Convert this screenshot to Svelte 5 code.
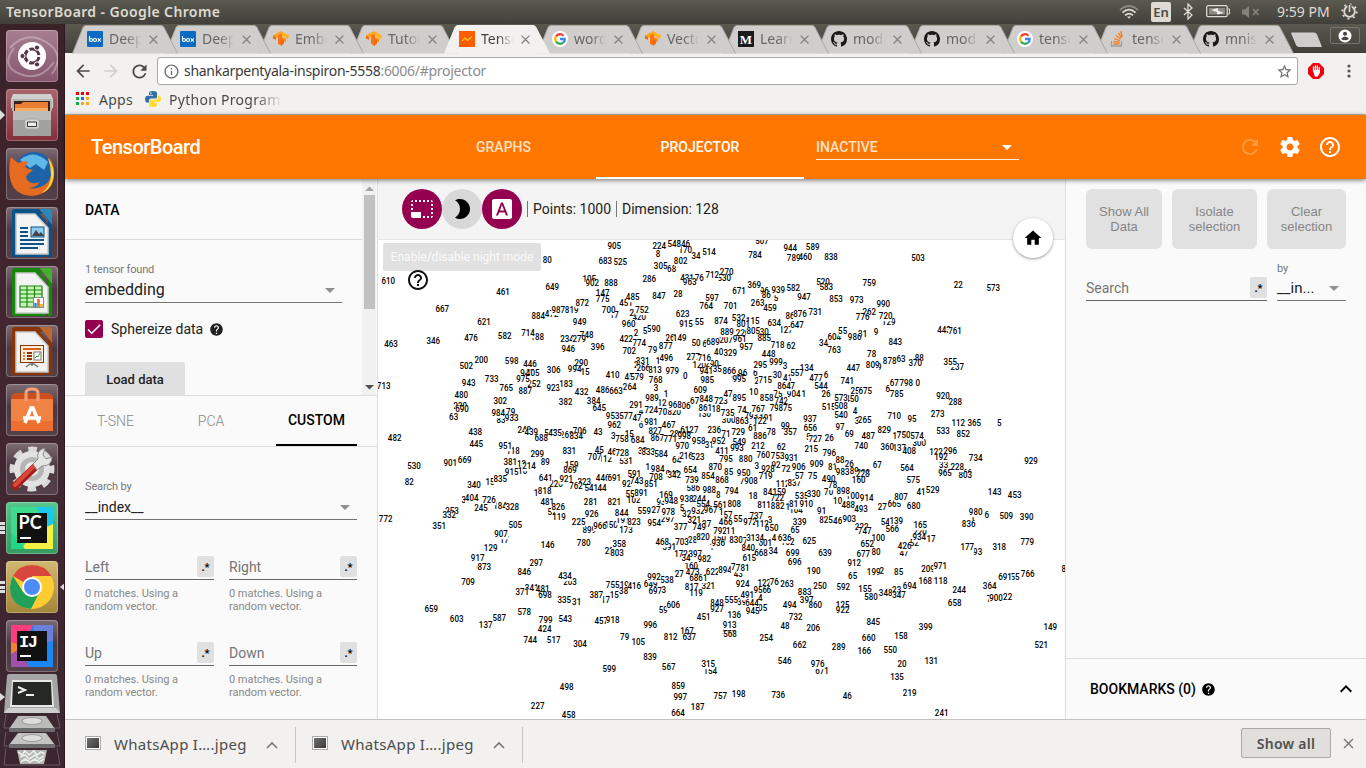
<script>
  const P = {
    settings: 'M19.43 12.98c.04-.32.07-.64.07-.98s-.03-.66-.07-.98l2.11-1.65c.19-.15.24-.42.12-.64l-2-3.46c-.12-.22-.39-.3-.61-.22l-2.49 1c-.52-.4-1.08-.73-1.69-.98l-.38-2.65C14.46 2.18 14.25 2 14 2h-4c-.25 0-.46.18-.49.42l-.38 2.65c-.61.25-1.17.59-1.69.98l-2.49-1c-.23-.09-.49 0-.61.22l-2 3.46c-.13.22-.07.49.12.64l2.11 1.65c-.04.32-.07.65-.07.98s.03.66.07.98l-2.11 1.65c-.19.15-.24.42-.12.64l2 3.46c.12.22.39.3.61.22l2.49-1c.52.4 1.08.73 1.69.98l.38 2.65c.03.24.24.42.49.42h4c.25 0 .46-.18.49-.42l.38-2.65c.61-.25 1.17-.59 1.69-.98l2.49 1c.23.09.49 0 .61-.22l2-3.46c.12-.22.07-.49-.12-.64l-2.11-1.65zM12 15.5c-1.93 0-3.5-1.57-3.5-3.5s1.57-3.5 3.5-3.5 3.5 1.57 3.5 3.5-1.57 3.5-3.5 3.5z',
    helpOutline: 'M11 18h2v-2h-2v2zm1-16C6.48 2 2 6.48 2 12s4.48 10 10 10 10-4.48 10-10S17.52 2 12 2zm0 18c-4.41 0-8-3.59-8-8s3.59-8 8-8 8 3.59 8 8-3.59 8-8 8zm0-14c-2.21 0-4 1.79-4 4h2c0-1.1.9-2 2-2s2 .9 2 2c0 2-3 1.75-3 5h2c0-2.25 3-2.5 3-5 0-2.21-1.79-4-4-4z',
    help: 'M12 2C6.48 2 2 6.48 2 12s4.48 10 10 10 10-4.48 10-10S17.52 2 12 2zm1 17h-2v-2h2v2zm2.07-7.75l-.9.92C13.45 12.9 13 13.5 13 15h-2v-.5c0-1.1.45-2.1 1.17-2.83l1.24-1.26c.37-.36.59-.86.59-1.41 0-1.1-.9-2-2-2s-2 .9-2 2H8c0-2.21 1.79-4 4-4s4 1.79 4 4c0 .88-.36 1.68-.93 2.25z',
    refresh: 'M17.65 6.35C16.2 4.9 14.21 4 12 4c-4.42 0-7.99 3.58-7.99 8s3.57 8 7.99 8c3.73 0 6.84-2.55 7.73-6h-2.08c-.82 2.33-3.04 4-5.65 4-3.31 0-6-2.69-6-6s2.69-6 6-6c1.66 0 3.14.69 4.22 1.78L13 11h7V4l-2.35 2.35z',
    home: 'M10 20v-6h4v6h5v-8h3L12 3 2 12h3v8z',
    select: 'M23 15h-2v2h2v-2zm0-4h-2v2h2v-2zm0 8h-2v2c1 0 2-1 2-2zM15 3h-2v2h2V3zm8 4h-2v2h2V7zm-2-4v2h2c0-1-1-2-2-2zM3 21h8v-6H1v4c0 1.1.9 2 2 2zM3 7H1v2h2V7zm12 12h-2v2h2v-2zm4-16h-2v2h2V3zm0 16h-2v2h2v-2zM3 3C2 3 1 4 1 5h2V3zm0 8H1v2h2v-2zm8-8H9v2h2V3zM7 3H5v2h2V3z',
    night: 'M10 2c-1.82 0-3.53.5-5 1.35C7.99 5.08 10 8.3 10 12s-2.01 6.92-5 8.65C6.47 21.5 8.18 22 10 22c5.52 0 10-4.48 10-10S15.52 2 10 2z',
    label: 'M9.93 13.5h4.14L12 7.98zM20 2H4c-1.1 0-2 .9-2 2v16c0 1.1.9 2 2 2h16c1.1 0 2-.9 2-2V4c0-1.1-.9-2-2-2zm-4.05 16.5l-1.14-3H9.17l-1.12 3H5.96l5.11-13h1.86l5.11 13h-2.09z',
    less: 'M12 8l-6 6 1.41 1.41L12 10.83l4.59 4.58L18 14z',
    star: 'M22 9.24l-7.19-.62L12 2 9.19 8.63 2 9.24l5.46 4.73L5.82 21 12 17.27 18.18 21l-1.63-7.03L22 9.24zM12 15.4l-3.76 2.27 1-4.28-3.32-2.88 4.38-.38L12 6.1l1.71 4.04 4.38.38-3.32 2.88 1 4.28L12 15.4z',
    back: 'M20 11H7.83l5.59-5.59L12 4l-8 8 8 8 1.41-1.41L7.83 13H20v-2z',
    forward: 'M4 11h12.17l-5.59-5.59L12 4l8 8-8 8-1.41-1.41L16.17 13H4v-2z',
    info: 'M11 17h2v-6h-2v6zm1-15C6.48 2 2 6.48 2 12s4.48 10 10 10 10-4.48 10-10S17.52 2 12 2zm0 18c-4.41 0-8-3.59-8-8s3.59-8 8-8 8 3.59 8 8-3.59 8-8 8zM11 9h2V7h-2v2z',
    down: 'M7 10l5 5 5-5z',
    check: 'M9 16.17L4.83 12l-1.42 1.41L9 19 21 7l-1.41-1.41z',
    close: 'M19 6.41L17.59 5 12 10.59 6.41 5 5 6.41 10.59 12 5 17.59 6.41 19 12 13.41 17.59 19 19 17.59 13.41 12z'
  };

  const tabs = [
    ['box', 'Deep'], ['box', 'Deep'], ['tf', 'Embe'], ['tf', 'Tutor'], ['tb', 'Tenso'],
    ['google', 'word2'], ['tf', 'Vecto'], ['medium', 'Learn'], ['github', 'mode'],
    ['github', 'mode'], ['google', 'tenso'], ['so', 'tenso'], ['github', 'mnist']
  ];

  const launchers = ['ubuntu', 'files', 'firefox', 'writer', 'calc', 'impress', 'software', 'settings', 'pycharm', 'chrome', 'idea'];

  // Each region: origin within the plot, then "label x y" in thirds of a pixel.
  // A leading "-" puts the label behind its neighbours.
  const regions = [
    [-2, -4, `610 37 138;461 381 171;649 529 156;80 514 75;683 688 78;-105 640 133;902 649 143;667 199 222;621 324 261;872 619 203;147 680 173;775 680 192;884 487 243;-472 527 238;987 547 225;-819 587 225;-748 632 301;949 611 261;582 386 304;346 172 317;463 45 327;476 285 309;714 456 294;-188 484 305;-234 573 312;279 610 312;946 577 342;396 665 336;200 316 374;598 407 377;446 462 387;-940 453 414;405 470 414;502 271 394;306 533 406;-290 616 384;994 596 402;-15 627 411;713 23 453;943 278 445;733 347 432;975 441 432;-252 474 447;765 391 459;887 448 468;923 532 459;183 570 448;432 617 471;486 680 465;480 256 480;302 373 499;382 569 501;384 653 497;645 670 520;-230 253 512;690 258 522;63 233 547;984 367 534;-79 404 532;-83 375 556;933 407 549;482 56 609;438 298 592;-243 445 586;439 466 591;688 496 608;-543 525 594;435 537 594;-268 572 600;834 601 602;-706 611 588;43 666 592;445 301 627;-118 411 649;951 388 633;299 484 657;831 580 648;45 670 644;-112 688 672;707 656 666;530 114 692;901 223 685;669 266 676;-213 430 688;381 403 681;89 508 681;214 459 693;-159 587 689;869 582 705;-10 440 707;915 407 712`],
    [228, -4, `905 25 34;224 160 34;-846 232 28;548 205 27;-170 238 46;514 309 50;-34 270 62;507 468 18;944 553 39;589 620 37;784 447 61;-460 598 66;789 563 69;838 675 65;525 43 81;802 224 77;8 156 57;-68 197 103;305 164 94;712 319 120;-270 362 110;-530 355 130;-431 243 130;-76 280 130;963 251 142;286 130 132;888 15 143;369 445 149;-520 651 140;583 661 155;939 517 166;-582 562 160;671 399 168;947 594 185;847 159 183;28 216 178;485 80 187;-96 475 168;86 481 180;-5 510 190;597 318 190;764 301 214;-701 374 214;-451 60 205;752 108 225;-420 100 245;-2 77 235;263 455 205;459 492 220;731 628 230;-86 552 243;876 582 238;623 230 238;-55 280 260;915 240 268;-532 398 250;-115 440 258;874 345 257;801 412 268;634 505 264;-127 540 284;647 573 270;700 8 225;-17 25 241;960 68 268;-590 143 283;5 117 288;-2 90 293;422 61 312;774 100 325;702 70 348;-79 140 345;877 179 332;-26 192 310;149 221 310;50 270 324;-6 296 326;689 321 322;889 363 292;-220 410 294;805 442 289;-30 475 292;-207 360 315;961 401 312;885 475 309;957 421 336;718 515 330;62 555 332;34 653 325;604 685 307;763 685 345;40 338 350;329 373 355;448 488 356;-1 156 378;496 181 370;-277 262 367;716 295 369;-290 318 386;-120 280 391;-331 110 378;-2 91 390;266 112 399;813 147 404;979 199 408;0 238 423;941 301 408;-35 334 401;866 370 408;-96 410 415;-6 448 413;985 304 435;-995 397 430;995 400 432;295 463 390;999 510 380;3 537 394;-134 602 400;557 573 414;-30 514 419;-41 545 428;-2 452 437;715 478 436;477 630 429;6 660 420;410 20 419;-45 69 425;579 93 427;768 149 436;264 71 457;3 150 460;663 30 469;1 180 476;989 138 488;609 283 466;10 443 471;47 366 477;895 400 489;-723 345 499;848 301 491;-67 266 498;858 482 489;-75 516 478;904 563 476;1 593 478;-742 526 499;864 534 452;-7 560 453;544 645 452;26 660 477;291 90 511;-12 168 504;-4 105 528;724 136 524;-70 170 532;968 207 509;-06 240 514;-820 205 530;-18 330 521;861 298 519;-130 295 537;735 365 534;-74 408 526;767 457 522;-79 505 518;875 538 518;515 668 517;937 612 553;-793 436 542;-191 480 549;863 408 558;-122 462 559;-300 368 555;953 20 542;-577 60 542;47 93 550;-6 105 570;981 135 562;962 25 571;467 188 569;99 538 573;656 613 579;-6127 250 584;-998 235 601;-28 205 597;-827 148 588;236 325 586;71 360 597;729 397 590;-61 440 580;78 496 592;886 462 604;357 553 592;-3 22 602;-15 70 597;758 48 613;684 95 616;867 154 608;771 193 612;998 235 602;958 278 618;-31 310 631;952 338 618;411 348 647;993 393 638;-549 400 622;212 456 633;-5 607 606;727 628 611;-26 670 610;970 229 632;62 526 636;215 616 643;46 18 651;728 49 655;-33 110 649;833 127 650;584 165 656;-531 60 677;64 212 675;216 240 664;523 275 667;795 360 672;880 419 672;760 472 659;753 515 663;931 556 669;796 670 654;909 632 688;906 578 695;-3 452 692;-92 510 690;928 486 703;-72 540 703;-1 125 695;984 155 703;870 328 695;654 253 706;-85 368 712;950 413 715;-591 85 716;-943 200 716;81 680 695`],
    [458, -4, `503 246 68;759 100 145;22 367 151;573 472 158;853 0 192;973 62 196;990 142 208;-262 100 232;776 80 246;-129 158 262;720 149 244;55 20 288;-31 80 298;986 56 306;9 120 290;443 324 286;761 357 287;843 178 320;78 107 356;-63 195 373;878 161 377;-88 250 368;370 238 384;355 343 380;-237 364 397;447 52 398;-9 130 395;809 110 391;741 34 437;-25 57 467;675 88 468;-0 245 443;-67 175 445;798 211 443;-6 155 463;785 182 478;920 321 484;288 358 500;573 15 489;-450 48 493;508 15 514;540 15 541;4 57 528;-3 63 558;265 86 555;710 175 544;95 228 553;273 305 538;112 367 564;365 415 563;5 490 563;829 145 585;-175 190 602;750 203 600;574 243 603;533 321 589;852 382 598;97 12 575;69 40 596;487 97 604;740 76 634;360 154 636;-137 190 640;408 220 648;-300 250 623;-122 300 652;296 343 647;192 315 667;734 419 670;929 585 677;88 12 674;-26 40 687;67 124 689;564 213 699;-33 323 689;228 364 696;-366 388 715;965 327 714;983 20 710;-89 55 708;-838 82 713`],
    [-2, 236, `82 100 20;340 294 29;-15 342 20;835 373 12;641 509 8;-226 540 27;921 571 13;-323 625 20;762 600 34;541 646 39;446 680 8;44 678 40;-13 487 55;818 506 49;-34 270 74;404 287 68;726 339 76;245 315 99;-184 372 92;328 409 97;-253 228 107;332 220 121;772 29 133;351 190 153;505 418 150;907 375 176;-17 385 194;129 344 220;481 514 80;-52 528 110;826 547 96;-119 549 127;281 644 80;926 647 118;225 608 140;-899 640 164;966 672 153;146 515 210;780 623 204;917 305 249;-9 308 283;873 325 276;709 276 321;297 481 265;846 445 290;434 567 304;-203 582 322;-341 467 338;-481 500 343;371 439 352;698 507 360;335 565 375;31 602 381;-1 682 376;387 661 361;659 166 401;603 242 433;587 370 428;137 329 449;578 445 412;799 509 436;424 506 461;543 568 432;457 676 439;744 463 495;517 533 494;304 612 508;498 572 635;227 485 694;458 578 720`],
    [228, 236, `691 25 8;-92 62 28;743 92 17;708 150 6;851 135 26;-342 205 -1;739 258 14;854 306 4;868 348 16;-77 415 18;908 435 18;719 479 2;-112 530 27;837 565 24;57 580 4;75 620 4;490 668 12;-55 72 56;891 105 54;169 180 59;988 310 46;-586 262 38;-8 337 59;794 377 49;18 441 62;84 485 50;159 520 50;535 587 62;330 623 57;-70 668 52;78 680 30;821 25 82;-102 83 75;-93 165 80;948 196 78;-244 280 72;938 242 71;554 292 87;-561 342 90;808 385 88;722 514 70;-811 474 90;882 515 93;1 545 97;81 563 86;910 601 88;-104 570 105;91 647 107;844 47 113;559 115 108;-27 150 105;978 187 111;-5 228 99;-32 242 118;-932 276 108;967 314 106;1 346 111;57 366 120;-737 451 122;-825 660 136;-150 15 149;-191 50 135;823 84 142;-173 60 164;954 145 145;-297 185 133;377 224 156;-27 302 146;749 280 155;-321 265 136;466 359 141;55 396 132;972 432 141;112 468 146;-3 492 135;650 497 158;339 581 142;65 567 165;792 342 169;11 374 169;358 40 207;803 33 234;-22 10 228;468 169 202;-391 190 216;703 228 200;-28 260 196;820 291 185;-150 340 190;936 337 203;-1 317 215;830 390 196;7 418 198;313 441 189;-4 467 188;-601 478 205;840 427 219;-4 504 188;636 536 188;-102 545 200;625 610 199;668 465 234;-34 502 228;699 560 234;639 657 235;696 566 260;190 623 289;-172 225 238;-397 268 236;34 240 249;982 295 253;615 430 249;-160 256 272;-27 220 297;473 260 291;622 320 291;894 357 286;7 382 276;781 410 280;-43 397 297;686 270 310;1 298 310;992 144 307;-538 183 314;-649 134 326;697 148 348;3 173 344;817 257 336;-321 307 332;119 270 354;755 20 330;-19 55 331;416 85 333;-15 25 360;38 53 349;7 5 376;924 410 326;-122 475 325;76 505 320;263 543 328;250 642 332;956 463 346;6 488 345;-883 596 350;491 424 361;4 463 370;-397 602 374;-848 333 383;555 376 376;-39 407 382;644 438 384;927 333 401;136 385 421;-05 470 399;945 440 408;494 551 389;860 628 391;59 172 406;606 202 390;451 293 427;732 569 427;918 20 434;996 133 451;913 371 451;-568 370 472;568 372 476;48 537 454;206 622 459;79 56 486;105 97 501;812 194 487;-167 243 467;637 250 487;254 481 489;662 581 511;839 132 545;567 188 576;315 307 567;-154 313 588;546 536 557;976 635 567;-671 648 588;599 10 582;859 217 633;997 223 667;757 343 663;198 398 657;736 517 661;187 275 697;664 216 715`],
    [458, 236, `575 232 16;-138 327 -3;-803 388 -1;-228 80 -2;-160 68 14;41 255 52;529 290 45;143 476 51;453 536 61;898 22 48;-100 50 62;914 92 68;807 195 66;-10 5 79;488 37 91;493 75 101;-665 175 88;27 139 97;680 233 92;-6 452 120;-1 410 126;980 419 112;509 511 124;390 572 127;836 398 148;46 5 137;903 40 133;-222 77 157;-54 148 141;139 181 137;566 169 161;165 253 151;747 86 169;-220 252 172;100 127 188;652 94 208;677 82 237;80 120 232;-17 285 193;934 250 187;-52 235 203;426 206 212;-47 204 234;177 394 217;-93 425 232;318 490 216;779 574 202;912 55 265;-2 137 288;199 113 290;85 188 292;-209 276 282;971 313 272;65 50 304;766 575 296;-55 537 306;691 507 307;8 683 282;592 22 337;155 87 342;694 221 332;168 268 318;118 314 319;364 461 334;244 370 346;580 105 366;-23 182 345;348 149 353;347 189 360;658 356 385;-7 459 373;900 480 370;22 515 367;-125 20 390;922 20 405;845 112 441;399 269 457;660 98 488;158 195 484;149 643 455;521 616 511;289 8 515;166 85 528;550 163 526;20 198 568;131 286 559;135 183 607;219 221 655;46 34 663;241 317 715`]
  ];

  const points = regions
    .flatMap(([ox, oy, data]) =>
      data.split(';').map((row) => {
        const [t, x, y] = row.trim().split(' ');
        const under = t.startsWith('-');
        return { t: under ? t.slice(1) : t, under, x: ox + x / 3, y: oy + y / 3 };
      })
    )
    .sort((a, b) => b.under - a.under);
</script>

{#snippet icon(d, size = 24, fill = 'currentColor')}
  <svg width={size} height={size} viewBox="0 0 24 24"><path {d} {fill} /></svg>
{/snippet}

{#snippet favicon(kind)}
  <svg class="fav" width="16" height="16" viewBox="0 0 16 16">
    {#if kind === 'box'}
      <rect width="16" height="16" rx="1" fill="#0a6bc4" />
      <g fill="none" stroke="#fff" stroke-width="1.1"><path d="M2.5 5v5" /><circle cx="4" cy="9" r="1.5" /><circle cx="8" cy="9" r="1.5" /><path d="M10.8 7.3l3 3.4M13.8 7.3l-3 3.4" /></g>
    {:else if kind === 'tf'}
      <path d="M0 4.5L8 0v4L3 7 0 8z" fill="#ffa41a" /><path d="M8 0l8 4.5-1 3.7-7-4z" fill="#ffb21f" />
      <path d="M5 4l4-1v12l-4-2.3z" fill="#ff7410" /><path d="M9 6l4 2v3l-4-1z" fill="#ff8a10" /><path d="M0 4.5L3 6v3L0 7.6zM8 8l3 1v3.5L8 15z" fill="#f26b0c" />
    {:else if kind === 'tb'}
      <rect width="16" height="16" fill="#ff5c00" /><path d="M3 10l3-3 2.5 2.5L13 5.5" fill="none" stroke="#ffc21a" stroke-width="1.3" />
    {:else if kind === 'google'}
      <circle cx="8" cy="8" r="8" fill="#fff" />
      <g fill="none" stroke-width="2.3"><path d="M4 5.4A4.8 4.8 0 0111.5 4.7" stroke="#ea4335" /><path d="M4 5.4a4.8 4.8 0 000 5.2" stroke="#fbbc05" /><path d="M4 10.6a4.8 4.8 0 007.1 1" stroke="#34a853" /><path d="M8 8h4.7c.1 1.5-.5 2.8-1.6 3.7" stroke="#4285f4" /></g>
    {:else if kind === 'medium'}
      <rect width="16" height="16" fill="#1a1a1a" /><text x="8" y="12.5" text-anchor="middle" font-family="Liberation Serif, serif" font-weight="bold" font-size="13" fill="#fff">M</text>
    {:else if kind === 'github'}
      <path fill="#1b1817" d="M8 0C3.58 0 0 3.58 0 8c0 3.54 2.29 6.53 5.47 7.59.4.07.55-.17.55-.38 0-.19-.01-.82-.01-1.49-2.01.37-2.53-.49-2.69-.94-.09-.23-.48-.94-.82-1.13-.28-.15-.68-.52-.01-.53.63-.01 1.08.58 1.23.82.72 1.21 1.87.87 2.33.66.07-.52.28-.87.51-1.07-1.78-.2-3.64-.89-3.64-3.95 0-.87.31-1.59.82-2.15-.08-.2-.36-1.02.08-2.12 0 0 .67-.21 2.2.82.64-.18 1.32-.27 2-.27.68 0 1.36.09 2 .27 1.53-1.04 2.2-.82 2.2-.82.44 1.1.16 1.92.08 2.12.51.56.82 1.27.82 2.15 0 3.07-1.87 3.75-3.65 3.95.29.25.54.73.54 1.48 0 1.07-.01 1.93-.01 2.2 0 .21.15.46.55.38A8.013 8.013 0 0016 8c0-4.42-3.58-8-8-8z" />
    {:else}
      <path d="M1.5 10v5h10v-5" fill="none" stroke="#9b9ea0" stroke-width="1.3" />
      <g stroke="#f48024" stroke-width="1.4"><path d="M3.5 13h6M3.6 10.5l6 .8M4.3 7.6l5.7 2M5.8 4.5l5 3.5M8.2 2l3.6 4.8M10.8.3l1.5 5.7" /></g>
    {/if}
  </svg>
{/snippet}

{#snippet doc(dark, mid, kind)}
  <path d="M12 3h24l10 11v34q0 2-2 2H14q-2 0-2-2z" transform="translate(-6 0)" fill={dark} />
  <path d="M42 14v36h2q2 0 2-2V14zM6 5q0-3 3-3h24l4 5H10v43H8q-2 0-2-2z" fill={dark} />
  <path d="M34 2h10q2 0 2 2v14z" fill={mid} />
  <path d="M10 7h19l13 14v26H10z" fill="#f3f3f3" stroke="#c9c9c9" stroke-width="1.5" />
  {#if kind === 'writer'}
    <g stroke={dark} stroke-width="2"><path d="M14 21h8M14 25h8M14 29h8M14 33h24M14 37h24M14 41h18" /></g>
    <rect x="25" y="20" width="13" height="10" fill="#8dcdf0" stroke={dark} /><path d="M26 29l4-6 3 4 2-2 3 4z" fill="#444" />
  {:else if kind === 'calc'}
    <rect x="14" y="20" width="22" height="21" fill="#c9f2b8" />
    <path d="M14 20h22v21H14zM14 24h22M14 28h22M14 32h22M14 36h22M21 20v21M28.5 20v21" fill="none" stroke={dark} stroke-width="1.2" />
    <rect x="27.5" y="31.5" width="10" height="10" fill="#fff" stroke="#888" /><path d="M29.5 37v4" stroke="#2a8ad0" stroke-width="2.5" /><path d="M32.5 33v8" stroke="#e0642a" stroke-width="2.5" /><path d="M35.5 38v3" stroke="#e5b91d" stroke-width="2.5" />
  {:else}
    <rect x="14.5" y="20.5" width="23" height="17" fill="#fdeedd" stroke={dark} />
    <path d="M17 24h18" stroke="#d6641e" stroke-width="2" /><path d="M17 28h2M17 31h2M17 34h2" stroke="#e08040" stroke-width="2" /><path d="M21 28h5M21 31h5M21 34h5" stroke={dark} stroke-width="2" />
    <rect x="28" y="27" width="7" height="8" fill="#fff" stroke="#777" /><path d="M29 33l2-2 1 1 2-4" stroke="#3a3" fill="none" /><path d="M26 38v3M20 42l4-3h4l4 3" stroke="#777" fill="none" stroke-width="1.5" />
  {/if}
{/snippet}

{#snippet field(name)}
  <div class="vec">
    <div class="input"><span>{name}</span><b class="rx">.*</b></div>
    <p>0 matches. Using a<br />random vector.</p>
  </div>
{/snippet}

<div class="screen">
  <header class="topbar">
    <strong>TensorBoard - Google Chrome</strong>
    <div class="tray">
      <svg width="20" height="16" viewBox="0 0 20 16" fill="none" stroke="#dfdbd2" stroke-width="1.7"><path d="M1 6q9-8 18 0" opacity=".4" /><path d="M3.5 8.7q6.5-6 13 0" /><path d="M6 11.4q4-3.5 8 0" /><path d="M8 12.5h4l-2 2.2z" fill="#dfdbd2" stroke="none" /></svg>
      <span class="lang">En</span>
      <svg width="10" height="17" viewBox="0 0 10 17"><path d="M1 5l8 7-4 4V1l4 4-8 7" fill="none" stroke="#dfdbd2" stroke-width="1.3" /></svg>
      <svg class="bat" width="24" height="13" viewBox="0 0 24 13"><rect x=".7" y=".7" width="20.5" height="11" rx="1.5" fill="none" stroke="#dfdbd2" stroke-width="1.3" /><rect x="3" y="3" width="16" height="6.5" fill="#8b8981" /><path d="M22 4h1.5v5H22" fill="none" stroke="#dfdbd2" /><path d="M5 5l7-2v2.500l6 2.500-7 1.500V7z" fill="#eee" /></svg>
      <svg class="mute" width="18" height="14" viewBox="0 0 18 14"><path d="M0 4.5h3L7 1v12L3 9.5H0z" fill="#85837c" /><path d="M11 4l5.5 6M16.5 4L11 10" stroke="#85837c" stroke-width="1.8" /></svg>
      <span class="clock">9:59 PM</span>
      <svg width="17" height="17" viewBox="0 0 17 17" fill="none" stroke="#dfdbd2"><circle cx="8.5" cy="8.5" r="5.3" stroke-width="1.8" /><circle cx="8.5" cy="8.5" r="7.2" stroke-width="1.8" stroke-dasharray="2 3.65" /><path d="M8.5 1.5v7" stroke="#4b4a44" stroke-width="4" /><path d="M8.5 2v7" stroke-width="1.6" /></svg>
    </div>
  </header>

  <div class="desktop">
    <aside class="launcher">
      {#each launchers as app}
        <div class="app {app}">
          <svg width="52" height="52" viewBox="0 0 52 52">
            {#if app === 'ubuntu'}
              <path d="M4 18Q20 0 40 12T46 44M48 32Q34 52 14 44T8 18" fill="none" stroke="#fff" stroke-opacity=".3" stroke-width="2" />
              <circle cx="26" cy="26" r="14" fill="#fff" /><circle cx="26" cy="26" r="7" fill="none" stroke="#5b3346" stroke-width="3" stroke-dasharray="12.6 2" stroke-dashoffset="-1" />
              <g fill="#5b3346" stroke="#fff"><circle cx="16.5" cy="26" r="2.6" /><circle cx="31" cy="17.6" r="2.6" /><circle cx="31" cy="34.4" r="2.6" /></g>
            {:else if app === 'files'}
              <path d="M7 5h38l2 5v9H5v-9z" fill="#cfcfcd" /><path d="M6 10h40v12H6z" fill="#b5b5b3" /><path d="M8 12h36v12H8z" fill="#3d2119" /><path d="M9 15h6l2-2h25v10H9z" fill="#e98035" /><path d="M9 19h33v4H9z" fill="#f4ad67" />
              <path d="M7 22h38v25H7z" fill="#a1a19f" /><path d="M7 22h38v9H7z" fill="#bcbcba" /><rect x="19" y="30" width="14" height="10" rx="2" fill="#d5d5d3" stroke="#aaa" /><path d="M21.500 33h9v4.500h-9z" fill="#eee" stroke="#333" />
            {:else if app === 'firefox'}
              <circle cx="28" cy="24" r="20" fill="#1e63a8" /><path d="M14 12q14-12 28 2l-4 8-8-6-6 4z" fill="#5eb8e8" />
              <path d="M5 9l7 6q6-3 10-1l-3 5q4 3 8 3l-6 5q-2 3 1 6 5 4 12 1-4 6-12 6 12 2 20-6Q50 22 41 8q8 6 7 20-2 18-22 20Q7 47 4 30 2 18 5 9z" fill="#e66a1f" /><path d="M42 10q8 10 5 22-3 10-11 13 9-8 9-18 0-9-3-17z" fill="#ffd33d" />
            {:else if app === 'writer'}
              {@render doc('#0b5288', '#2a86bd', 'writer')}
            {:else if app === 'calc'}
              {@render doc('#18860b', '#42b02e', 'calc')}
            {:else if app === 'impress'}
              {@render doc('#8a3408', '#bd6834', 'impress')}
            {:else if app === 'software'}
              <path d="M5 12l4-3h34l4 3v35H5z" fill="#ef6f31" /><path d="M5 12l4-3h34l4 3v3H5z" fill="#c9501f" /><path d="M5 15h42v22H5z" fill="#f08244" /><path d="M20 17V9q0-4 6-4t6 4v8" fill="none" stroke="#f7a077" stroke-width="3" />
              <path d="M19 39l6-15h2l6 15M17 34h18" fill="none" stroke="#fff" stroke-width="3.500" />
            {:else if app === 'settings'}
              <circle cx="26" cy="26" r="19.500" fill="none" stroke="#d9d9d9" stroke-width="6" stroke-dasharray="8.500 6.815" stroke-dashoffset="4.250" />
              <circle cx="26" cy="26" r="18" fill="#e2e2e2" /><circle cx="26" cy="26" r="12" fill="#b5b5b5" /><circle cx="26" cy="26" r="7" fill="#e9e9e9" />
              <path d="M9 43L29 24" stroke="#a51c18" stroke-width="7.500" stroke-linecap="round" /><path d="M9 42L28 23" stroke="#d8473c" stroke-width="4" stroke-linecap="round" />
              <path d="M27 21l5-5q-2-9 7-11l-2 7 3 4 6-2q0 9-10 9l-5 4z" fill="#e3e6e2" stroke="#8e918e" />
            {:else if app === 'pycharm'}
              <path d="M5 5h42v42H5z" fill="#3ddb8e" /><path d="M30 5h17v25z" fill="#1cc8ea" /><path d="M47 22v25H16l8-14z" fill="#f6ef44" /><path d="M5 30l14 17H5z" fill="#20d68a" />
              <rect x="11" y="11" width="30" height="30" fill="#111" /><text x="12.5" y="27" font-family="Lato, sans-serif" font-weight="bold" font-size="18" fill="#fff">PC</text><path d="M14 36h11" stroke="#fff" stroke-width="2" />
            {:else if app === 'chrome'}
              <circle cx="26" cy="26" r="22" fill="#fc3" /><path d="M26 26L7 15Q13 4 26 4t19.5 11H26z" fill="#d8473c" /><path d="M26 48Q4 46 4 26q0-6 3-11l10 16 16 1-8 16z" fill="#21a05a" /><circle cx="26" cy="26" r="10" fill="#fff" /><circle cx="26" cy="26" r="8" fill="#4d8cf5" />
            {:else}
              <path d="M5 5h42v42H5z" fill="#1a86f0" /><path d="M5 5h22L18 24 5 26z" fill="#fb3d7d" /><path d="M27 5h20v16L30 24z" fill="#6a80dc" /><path d="M5 22l12 4-8 12-4-3z" fill="#f0862c" /><path d="M5 34l10-6 8 19H5z" fill="#a050a8" />
              <rect x="11" y="11" width="30" height="30" fill="#111" /><text x="13" y="27" font-family="Liberation Mono, monospace" font-weight="bold" font-size="17" fill="#fff" letter-spacing="-1.5">IJ</text><path d="M14 36h11" stroke="#fff" stroke-width="2" />
            {/if}
          </svg>
          {#if app === 'files'}<i class="tick"></i>{/if}
          {#if app === 'pycharm' || app === 'chrome'}<i class="bars"></i>{/if}
          {#if app === 'chrome'}<i class="focus"></i>{/if}
        </div>
      {/each}
      <div class="stack">
        <svg width="65" height="94" viewBox="0 0 65 94">
          <path d="M6 40l-2 14h56l-3-14M6 58l-2 14h56l-3-14M6 74l-2 17h56l-3-17" fill="none" stroke="#6b5860" />
          <path d="M9 0h46q2 0 2 2l3 37H4L7 2q0-2 2-2z" fill="#a5a5a5" /><path d="M8 34h48l4 5H4z" fill="#cfcfcf" /><path d="M12 6h40l2 27H10z" fill="#e8e8e8" /><path d="M13 8h38l1 23H12z" fill="#262826" />
          <path d="M18 13l7 3-7 3M26 21h8" fill="none" stroke="#eee" stroke-width="2" />
          <g><path d="M18 42h28l9 13H9z" fill="#bcbcba" /><ellipse cx="32" cy="47" rx="10" ry="3.5" fill="#dedede" stroke="#999" /><path d="M9 54h46v4H9z" fill="#6c6c6c" /><path d="M18 59h28l9 12H9z" fill="#c4c4c2" /><ellipse cx="32" cy="64" rx="10" ry="3.5" fill="#dedede" stroke="#999" /><path d="M9 70h46v4H9z" fill="#6c6c6c" /></g>
          <path d="M17 76h30l-3 14H20z" fill="#b4b6b4" /><path d="M18 78l4 3 3-4 4 4 5-4 3 4 4-3 4 2M20 83l5-2 4 4 6-4 4 4 5-3M21 88l4-3 5 3 5-3 4 3 5-3" stroke="#eceeec" stroke-width="1.600" fill="none" />
          <path d="M0 19l5 4-5 4z" fill="#ddd" />
        </svg>
      </div>
    </aside>

    <div class="browser">
      <div class="strip">
        {#each tabs as [kind, title], i}
          <div class="tab" class:active={i === 4} style:z-index={i === 4 ? 30 : 20 - i}>
            <svg class="shape" width="107" height="29" viewBox="0 0 107 29"><path d="M.5 28.5L11 2.5Q12 .5 14 .5h75q2 0 3 2l13.5 26" /></svg>
            {@render favicon(kind)}
            <span class="title">{title}</span>
            <span class="x">{@render icon(P.close, 15)}</span>
          </div>
        {/each}
        <svg class="newtab" width="33" height="16" viewBox="0 0 33 16"><path d="M2 .5h22q2 0 3 2L32 15H9q-2 0-3-2L1 1z" fill="#d0cecc" /></svg>
        <span class="user"><svg width="14" height="14" viewBox="0 0 14 14"><circle cx="7" cy="7" r="6.5" fill="#fff" /><circle cx="7" cy="4.7" r="2" fill="#44433e" /><path d="M3 10q1.5-2.5 4-2.5T11 10q-4 2.5-8 0z" fill="#44433e" /></svg></span>
      </div>

      <div class="toolbar">
        <span class="nav">{@render icon(P.back, 20, '#4a4a4a')}</span>
        <span class="nav">{@render icon(P.forward, 20, '#d0cfce')}</span>
        <span class="nav">{@render icon(P.refresh, 21, '#4a4a4a')}</span>
        <div class="omnibox">
          {@render icon(P.info, 17, '#6e6e6e')}
          <span class="url">shankarpentyala-inspiron-5558<em>:6006/#projector</em></span>
          {@render icon(P.star, 17, '#6e6e6e')}
        </div>
        <svg class="stop" width="16" height="16" viewBox="0 0 16 16"><path d="M5 0h6l5 5v6l-5 5H5l-5-5V5z" fill="#f2000f" /><path d="M5.500 8V4M7.400 8V2.800M9.300 8V3M11.200 9V4.500" stroke="#fff" stroke-width="1.300" stroke-linecap="round" /><path d="M4.800 7h7v3l-2 3.500H6.800z" fill="#fff" /></svg>
        <svg class="dots" width="4" height="14" viewBox="0 0 4 14" fill="#555"><circle cx="2" cy="2" r="1.6" /><circle cx="2" cy="7" r="1.6" /><circle cx="2" cy="12" r="1.6" /></svg>
      </div>

      <div class="bookmarks">
        <svg width="14" height="14" viewBox="0 0 14 14"><path d="M0 0h3v3H0zM5 0h3v3H5zM10 0h3v3h-3z" fill="#e8000d" /><path d="M0 5h3v3H0z" fill="#12a84c" /><path d="M5 5h3v3H5z" fill="#1173e8" /><path d="M10 5h3v3h-3z" fill="#fba918" /><path d="M0 10h3v3H0z" fill="#12a84c" /><path d="M5 10h3v3H5zM10 10h3v3h-3z" fill="#fba918" /></svg>
        <span class="bm">Apps</span>
        <svg class="py" width="16" height="16" viewBox="0 0 16 16"><path d="M8 0c-3 0-4 .8-4 2.3V4h4.200v.8H2.500C1 4.800 0 6 0 8.200S1 11.600 2.300 11.600H4V9.700C4 8.400 5 7.600 6.300 7.600h4c1 0 1.700-.8 1.700-1.800V2.300C12 .8 10.800 0 8 0z" fill="#3270a5" /><path d="M8 16c3 0 4-.8 4-2.300V12H7.800v-.8h5.700C15 11.200 16 10 16 7.800S15 4.400 13.700 4.400H12.500v2.300c0 1.300-1 2.100-2.200 2.100h-4C5 8.800 4 9.500 4 10.600v3.100C4 15.200 5.200 16 8 16z" fill="#fd3" /><circle cx="5.800" cy="2.200" r=".8" fill="#fff" /></svg>
        <span class="bm fade">Python Program</span>
      </div>

      <div class="tb-header">
        <h1>TensorBoard</h1>
        <span class="htab first">GRAPHS</span>
        <span class="htab sel">PROJECTOR</span>
        <span class="inactive"><span>INACTIVE</span>{@render icon(P.down, 24, '#fff')}</span>
        <div class="hicons">
          <span class="dim">{@render icon(P.refresh, 24, '#fff')}</span>
          {@render icon(P.settings, 24, '#fff')}
          {@render icon(P.helpOutline, 24, '#fff')}
        </div>
      </div>

      <main>
        <section class="left">
          <div class="data">
            <div class="databody">
              <h2>DATA</h2>
              <div class="datafields">
                <small>1 tensor found</small>
                <div class="select"><span>embedding</span>{@render icon(P.down, 24, '#8f8f8f')}</div>
                <div class="sphere"><i class="cb">{@render icon(P.check, 18, '#fff')}</i><span>Sphereize data</span>{@render icon(P.help, 15, '#212121')}</div>
                <button class="load">Load data</button>
              </div>
            </div>
            <div class="scroll">
              <svg width="9" height="5" viewBox="0 0 9 5"><path d="M0 5l4.5-4.5L9 5z" fill="#a3a3a3" /></svg>
              <i></i>
              <svg width="9" height="5" viewBox="0 0 9 5"><path d="M0 0l4.5 4.5L9 0z" fill="#505050" /></svg>
            </div>
          </div>
          <nav><span>T-SNE</span><span>PCA</span><span class="on">CUSTOM</span></nav>
          <div class="custom">
            <small>Search by</small>
            <div class="select"><span>__index__</span>{@render icon(P.down, 24, '#8f8f8f')}</div>
            <div class="grid">
              {@render field('Left')}
              {@render field('Right')}
              {@render field('Up')}
              {@render field('Down')}
            </div>
          </div>
        </section>

        <section class="center">
          <div class="pbar">
            <span class="round">{@render icon(P.select, 24, '#fff')}</span>
            <span class="round grey">{@render icon(P.night, 24, '#000')}</span>
            <span class="round">{@render icon(P.label, 24, '#fff')}</span>
            <span class="stat">Points: 1000</span>
            <span class="stat">Dimension: 128</span>
          </div>
          <div class="plot">
            {#each points as p}
              <span class="pt" style="left:{p.x}px;top:{p.y}px">{p.t}</span>
            {/each}
            <span class="tip">Enable/disable night mode</span>
            <span class="q">{@render icon(P.helpOutline, 24, '#111')}</span>
          </div>
          <span class="homebtn">{@render icon(P.home, 20, '#000')}</span>
        </section>

        <section class="right">
          <div class="btns"><button>Show All<br />Data</button><button>Isolate<br />selection</button><button>Clear<br />selection</button></div>
          <div class="search">
            <div class="input"><span>Search</span><b class="rx">.*</b></div>
            <div class="by"><small>by</small><div class="select"><span>__in...</span>{@render icon(P.down, 24, '#8f8f8f')}</div></div>
          </div>
          <div class="bms"><span>BOOKMARKS (0)</span>{@render icon(P.help, 15, '#000')}<span class="up">{@render icon(P.less, 24, '#000')}</span></div>
        </section>
      </main>

      <footer>
        {#each [1, 2] as n}
          <div class="dl">
            <i class="thumb"></i><span>WhatsApp I….jpeg</span>
            <svg width="12" height="8" viewBox="0 0 12 8"><path d="M1 7l5-5 5 5" fill="none" stroke="#777" stroke-width="1.6" /></svg>
          </div>
        {/each}
        <button class="showall">Show all</button>
        <span class="cls">{@render icon(P.close, 17, '#777')}</span>
      </footer>
    </div>
  </div>
</div>

<style>
  :global(body) { margin: 0; overflow: hidden; }
  * { box-sizing: border-box; }
  svg { display: block; flex: none; }
  button { border: 0; padding: 0; margin: 0; }
  .screen { width: 1366px; height: 768px; display: flex; flex-direction: column; font-family: Roboto, sans-serif; overflow: hidden; }
  .topbar { height: 24px; flex: none; display: flex; align-items: center; justify-content: space-between; padding: 0 8px 1px 6px; background: linear-gradient(#5b5a50, #403f3a); color: #dfdbd2; font-family: 'Noto Sans', sans-serif; }
  .topbar strong { font-size: 14px; letter-spacing: .38px; font-weight: 600; }
  .tray { display: flex; align-items: center; }
  .lang { width: 20px; height: 20px; margin-left: 12px; margin-right: 12px; border-radius: 2px; background: #dfdbd2; color: #4a4943; font-size: 13px; line-height: 20px; text-align: center; font-weight: 600; }
  .bat { margin-left: 13px; }
  .mute { margin-left: 12px; }
  .clock { margin: 0 11px 0 17px; font-size: 14px; letter-spacing: 0; width: 53px; white-space: nowrap; }
  .desktop { flex: 1; min-height: 0; display: flex; }
  .launcher { width: 65px; flex: none; background: linear-gradient(#3b2229, #43262f 40%, #3c2731); padding: 6px 0 0; border-right: 1px solid #281a20; display: flex; flex-direction: column; overflow: hidden; }
  .app { position: relative; width: 52px; height: 52px; margin: 0 0 7px 6px; flex: none; border-radius: 4px; background: linear-gradient(#7d6c73, #4c3841 45%, #54414a); box-shadow: inset 0 0 0 1px rgba(255, 255, 255, .25); }
  .ubuntu { background: linear-gradient(#a77f91, #86566d); }
  .files { background: linear-gradient(#a8656c, #85303c); }
  .pycharm { background: linear-gradient(#58c58e, #369b61); }
  .chrome { background: linear-gradient(#d0b770, #a4863a); }
  .tick { position: absolute; left: -6px; top: 21px; border: 5px solid transparent; border-left-color: #ddd; border-right: 0; }
  .bars { position: absolute; left: -6px; top: 20px; width: 5px; height: 12px; background: repeating-linear-gradient(#ddd 0 3px, transparent 3px 4.5px); }
  .focus { position: absolute; right: -7px; top: 22px; border: 4px solid transparent; border-right: 5px solid #ddd; border-left: 0; }
  .stack { margin-top: -5px; }
  .browser { flex: 1; min-width: 0; display: flex; flex-direction: column; background: #f2f1ef; }
  .strip { height: 29px; flex: none; display: flex; padding: 1px 6px 0 7px; background: linear-gradient(#5a594f, #403f3a); }
  .tab { position: relative; width: 93px; height: 28px; flex: none; display: flex; align-items: center; padding-left: 15px; }
  .shape { position: absolute; left: 0; top: 0; fill: #d0cecc; stroke: #aaa7a3; }
  .active .shape { fill: #f2f1ef; stroke: #f2f1ef; }
  .fav { position: relative; }
  .title { position: relative; margin-left: 6px; width: 34px; overflow: hidden; white-space: nowrap; font: 14px 'Noto Sans', sans-serif; color: #666; -webkit-mask-image: linear-gradient(90deg, #000 50%, transparent 95%); mask-image: linear-gradient(90deg, #000 50%, transparent 95%); margin-top: -1px; }
  .active .title { color: #444; }
  .x { position: relative; margin-left: 3px; color: #85827f; }
  .newtab { margin: 7px 0 0 9px; }
  .user { margin: 2px 0 0 auto; width: 30px; height: 17px; border: 1px solid #77766d; border-radius: 2px; display: flex; justify-content: center; align-items: center; }
  .toolbar { height: 36px; flex: none; display: flex; align-items: center; padding-left: 4px; }
  .nav { width: 28px; display: flex; justify-content: center; }
  .omnibox { margin-left: 4px; width: 1141px; height: 28px; background: #fff; border: 1px solid #aaa8a5; border-radius: 3px; display: flex; align-items: center; padding: 0 4px 0 5px; }
  .url { flex: 1; margin-left: 4px; margin-top: -2px; font: 14px 'Noto Sans', sans-serif; letter-spacing: -.28px; color: #3a3a3a; }
  .url em { font-style: normal; color: #8c8c8c; }
  .stop { margin-left: 10px; }
  .dots { margin-left: 23px; }
  .bookmarks { height: 26px; flex: none; display: flex; align-items: center; padding: 0 0 5px 11px; border-bottom: 1px solid #bcbab8; }
  .bm { margin-left: 9px; font: 14px 'Noto Sans', sans-serif; letter-spacing: .28px; color: #4a4a4a; white-space: nowrap; }
  .py { margin-left: 12px; }
  .fade { margin-left: 8px; width: 114px; overflow: hidden; -webkit-mask-image: linear-gradient(90deg, #000 75%, transparent 100%); mask-image: linear-gradient(90deg, #000 75%, transparent 100%); }
  .tb-header { position: relative; z-index: 3; height: 64px; flex: none; background: #ff7700; color: #fff; display: flex; align-items: center; padding-left: 26px; box-shadow: 0 1px 5px rgba(0, 0, 0, .55); }
  .tb-header h1 { margin: 0; font-size: 20px; font-weight: 500; letter-spacing: -.5px; width: 297px; }
  .htab { width: 208px; height: 64px; line-height: 64px; font-size: 14px; font-weight: 500; color: rgba(255, 255, 255, .8); text-align: center; }
  .first { width: 208px; text-align: left; padding-left: 88px; }
  .htab.sel { color: #fff; border-bottom: 2px solid #fff; }
  .inactive { width: 203px; height: 25px; margin-left: 12px; border-bottom: 1px solid rgba(255, 255, 255, .85); display: flex; align-items: center; justify-content: space-between; font-size: 14px; font-weight: 500; color: rgba(255, 255, 255, .8); }
  .hicons { margin-left: auto; margin-right: 24px; display: flex; gap: 16px; }
  .dim { opacity: .25; }
  main { flex: 1; min-height: 0; display: flex; background: #fafafa; }
  .left { width: 313px; flex: none; border-right: 1px solid #ddd; display: flex; flex-direction: column; }
  .data { height: 217px; flex: none; display: flex; border-bottom: 1px solid #ddd; overflow: hidden; }
  .databody { width: 297px; }
  h2 { margin: 0; height: 61px; padding: 23px 20px 0; font-size: 14px; line-height: 17px; font-weight: 500; border-bottom: 1px solid #ddd; }
  .datafields { padding: 23px 20px 0; }
  small { display: block; font-size: 11px; line-height: 14px; letter-spacing: -.15px; color: #777; }
  .select { display: flex; align-items: center; justify-content: space-between; border-bottom: 1px solid #737373; color: #212121; height: 26px; font-size: 16px; }
  .sphere { display: flex; align-items: center; gap: 8px; height: 18px; margin-top: 17px; font-size: 14px; color: #212121; }
  .sphere > :global(svg) { margin-left: -2px; }
  .cb { width: 18px; height: 18px; background: #94004f; border-radius: 2px; }
  .load { margin-top: 24px; padding-bottom: 2px; width: 100px; height: 36px; background: #e0e0e0; border-radius: 3px; font: 500 13px Roboto, sans-serif; color: #212121; }
  .scroll { width: 14px; background: #f1f1f1; display: flex; flex-direction: column; align-items: center; padding: 7px 0 5px; }
  .scroll i { width: 11px; height: 114px; margin: 4px 0 auto; background: #c1c1c1; }
  nav { height: 51px; flex: none; display: flex; padding-right: 20px; border-bottom: 1px solid #ddd; font-size: 14px; color: #888; font-weight: 300; }
  nav span { width: 90px; text-align: center; line-height: 50px; }
  nav span:first-child { width: 101px; }
  nav .on { width: 81px; margin-left: auto; line-height: 49px; color: #000; font-weight: 500; border-bottom: 2px solid #000; }
  .custom { padding: 33px 20px 0; }
  .custom .select { font-size: 14px; height: 26px; }
  .grid { display: grid; grid-template-columns: 129px 128px; column-gap: 15px; row-gap: 31px; margin-top: 35px; }
  .vec { height: 55px; }
  .input { height: 25px; border-bottom: 1px solid #666; display: flex; justify-content: space-between; align-items: flex-start; font-size: 14px; line-height: 24px; color: #757575; }
  .rx { width: 17px; height: 21px; margin-top: 1px; background: #e0e0e0; border-radius: 2px; color: #000; text-align: center; font-size: 11px; line-height: 23px; }
  .vec p { margin: 7px 0 0; font-size: 11px; line-height: 13px; color: #888; letter-spacing: -.03px; }
  .center { position: relative; width: 687px; flex: none; display: flex; flex-direction: column; }
  .pbar { height: 61px; flex: none; background: #f4f4f4; border-bottom: 1px solid #e6e6e6; display: flex; align-items: center; padding-left: 24px; font-size: 14px; color: #212121; }
  .round { width: 40px; height: 40px; border-radius: 50%; background: #94004f; display: flex; align-items: center; justify-content: center; }
  .grey { background: #d8d8d8; }
  .stat { border-left: 1px solid #777; padding-left: 5px; margin-left: 5px; line-height: 16px; }
  .plot { position: relative; flex: 1; overflow: hidden; background: #fff; }
  .pt { position: absolute; transform: translate(-50%, -50%) scaleY(1.12); font-size: 8px; font-weight: 500; line-height: 6.5px; background: #fff; color: #000; }
  .tip { position: absolute; left: 5px; top: 3px; width: 158px; height: 28px; border-radius: 2px; background: #e1e1e1; color: #fafafa; font-size: 12px; line-height: 28px; text-align: center; letter-spacing: 0; }
  .q { position: absolute; left: 28px; top: 28px; }
  .homebtn { position: absolute; left: 635px; top: 39px; width: 40px; height: 40px; border-radius: 50%; background: #fff; box-shadow: 0 1px 3px rgba(0, 0, 0, .4); display: flex; align-items: center; justify-content: center; }
  .right { flex: 1; border-left: 1px solid #ddd; display: flex; flex-direction: column; }
  .btns { display: flex; gap: 10px; padding: 10px 20px 0; }
  .btns button { height: 60px; width: 76px; border-radius: 6px; background: #e1e1e1; color: #858585; font: 13px/15px 'Liberation Sans', sans-serif; }
  .btns button:nth-child(2) { width: 85px; }
  .btns button:nth-child(3) { width: 79px; }
  .search { display: flex; padding: 13px 20px 0; gap: 10px; align-items: flex-end; }
  .search .input { width: 181px; }
  .by { width: 69px; }
  .by .select { height: 25px; font-size: 15px; }
  .bms { margin-top: auto; height: 61px; border-top: 1px solid #ddd; display: flex; align-items: center; padding: 0 8px 0 24px; gap: 5px; font-size: 14px; font-weight: 500; }
  .up { margin-left: auto; }
  footer { height: 49px; flex: none; border-top: 1px solid #c4c2c0; display: flex; align-items: center; font-family: 'Noto Sans', sans-serif; color: #4c4c4c; }
  .dl { height: 36px; border-right: 1px solid #c9c7c5; display: flex; align-items: center; width: 227px; padding-left: 16px; font-size: 15px; letter-spacing: .3px; margin-top: 2px; }
  .dl:first-child { width: 231px; padding-left: 20px; }
  .dl span { margin: -2px 18px 0 13px; width: 134px; white-space: nowrap; }
  .thumb { width: 16px; height: 14px; margin-top: -4px; border: 1px solid #aaa; background: linear-gradient(135deg, #777, #333); box-shadow: inset 0 0 0 1px #fff; }
  .showall { margin-left: auto; width: 90px; height: 30px; margin-top: -2px; background: #e1dfdc; border: 1px solid #aaa8a5; border-radius: 2px; font: 600 14px 'Noto Sans', sans-serif; letter-spacing: .25px; color: #505050; }
  .cls { margin: -2px 9px 0; }
</style>
